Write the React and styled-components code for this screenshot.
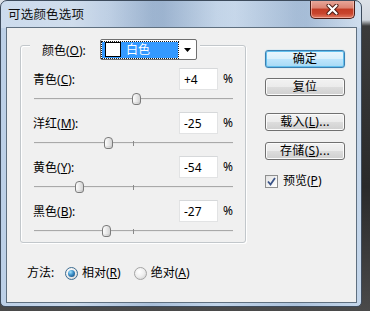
import React from 'react';
import styled, { createGlobalStyle } from 'styled-components';

const Global = createGlobalStyle`
  html, body { margin: 0; padding: 0; }
  body {
    width: 370px;
    height: 311px;
    overflow: hidden;
    background: linear-gradient(to bottom, #dde2e8 0, #d2d8df 20px, #3b3b3b 26px, #2a2a2a 60%, #4a4a4a 100%);
    font-family: "Noto Sans", "Noto Sans CJK SC", sans-serif;
    font-size: 12px;
    color: #000;
  }
`;

const Window = styled.div`
  width: 362px;
  height: 307px;
  box-sizing: border-box;
  border: 1px solid #3d4b5c;
  border-radius: 7px 7px 5px 5px;
  background: linear-gradient(90deg, #bcd0e7 0%, #c9d8ea 20%, #a9bfd9 42%, #c1d4e9 60%, #adc3dc 82%, #c4d6ea 100%);
  display: flex;
  flex-direction: column;
  overflow: hidden;
`;

const TitleBar = styled.div`
  height: 27px;
  display: flex;
  align-items: flex-start;
  padding-left: 7px;
  background: linear-gradient(90deg, rgba(255,255,255,0.25) 0%, rgba(255,255,255,0.05) 30%, rgba(80,110,150,0.18) 45%, rgba(255,255,255,0.15) 65%, rgba(90,120,160,0.12) 85%, rgba(255,255,255,0.2) 100%);
`;

const TitleText = styled.div`
  font-size: 12.5px;
  line-height: 14px;
  margin-top: 7px;
  color: #111;
  letter-spacing: 0.2px;
`;

const CloseButton = styled.div`
  margin-left: auto;
  margin-right: 6px;
  margin-top: -1px;
  width: 45px;
  height: 19px;
  box-sizing: border-box;
  border: 1px solid #4b1c16;
  border-top: none;
  border-radius: 0 0 5px 5px;
  background: linear-gradient(to bottom, #e9ab9e 0%, #dc8271 45%, #c23b24 50%, #c8452e 75%, #e07a62 100%);
  box-shadow: inset 0 0 0 1px rgba(255, 210, 200, 0.55);
  display: flex;
  align-items: center;
  justify-content: center;
`;

const Client = styled.div`
  margin: 0 5px 4px 6px;
  flex: 1;
  background: #f0f0f0;
  box-shadow: 0 0 0 1px #5f7080;
  display: flex;
`;

const LeftCol = styled.div`
  padding: 17px 0 0 13px;
  display: flex;
  flex-direction: column;
`;

const GroupBox = styled.div`
  position: relative;
  width: 226px;
  height: 198px;
  box-sizing: border-box;
  border: 1px solid #c2c7cb;
  border-radius: 3px;
  box-shadow: inset 1px 1px 0 #fff, 1px 1px 0 #fff;
  padding: 22px 11px 0 12px;
  display: flex;
  flex-direction: column;
`;

const Legend = styled.div`
  position: absolute;
  top: -7px;
  left: 9px;
  height: 21px;
  padding: 0 3px 0 12px;
  background: #f0f0f0;
  display: flex;
  align-items: center;
`;

const LegendLabel = styled.div`
  width: 58px;
  line-height: 14px;
  padding-top: 3px;
`;

const Dropdown = styled.div`
  width: 97px;
  height: 21px;
  box-sizing: border-box;
  border: 1px solid #6f6f6f;
  border-radius: 2px;
  background: #fff;
  display: flex;
  align-items: center;
  padding: 1px;
`;

const Selected = styled.div`
  width: 76px;
  height: 16px;
  box-sizing: border-box;
  background: #3399ff;
  outline: 1px dotted #1a1a1a;
  display: flex;
  align-items: center;
  padding-left: 3px;
  color: #fff;
  line-height: 14px;
`;

const Swatch = styled.div`
  width: 16px;
  height: 15px;
  box-sizing: border-box;
  background: #fff;
  border: 1px solid #000;
  margin-right: 5px;
`;

const ArrowArea = styled.div`
  flex: 1;
  display: flex;
  align-items: center;
  justify-content: center;
  padding-left: 2px;
`;

const SliderBlock = styled.div`
  height: 44px;
  display: flex;
  flex-direction: column;
`;

const ValueRow = styled.div`
  height: 22px;
  display: flex;
  align-items: center;
`;

const Label = styled.div`
  flex: 1;
  line-height: 14px;
  padding-top: 1px;
`;

const ValueInput = styled.input`
  width: 39px;
  height: 22px;
  box-sizing: border-box;
  margin: 0;
  border: 1px solid #e2e3e4;
  border-top-color: #d6d8da;
  background: #fff;
  font-family: "Noto Sans", "Noto Sans CJK SC", sans-serif;
  font-size: 12px;
  color: #000;
  padding: 0 0 0 4px;
  outline: none;
`;

const Percent = styled.div`
  width: 11px;
  margin-left: 5px;
  line-height: 14px;
`;

const TrackArea = styled.div`
  position: relative;
  height: 22px;
  margin: 0 1px 0 1px;
`;

const Track = styled.div`
  margin-top: 8px;
  height: 1px;
  background: #a9a9a9;
  border-bottom: 1px solid #e8e8e8;
`;

const Tick = styled.div`
  position: absolute;
  top: 7px;
  left: 99px;
  width: 1px;
  height: 5px;
  background: #8a8a8a;
`;

const Thumb = styled.div`
  position: absolute;
  top: 3px;
  width: 9px;
  height: 12px;
  box-sizing: border-box;
  border: 1px solid #7b7b7b;
  border-radius: 4px 4px 3px 3px;
  background: linear-gradient(to right, #fdfdfd 0%, #eaeaea 50%, #d4d4d4 100%);
  box-shadow: inset 0 -2px 0 rgba(0,0,0,0.06);
`;

const MethodRow = styled.div`
  margin-top: 22px;
  height: 16px;
  padding-left: 7px;
  display: flex;
  align-items: center;
`;

const MethodLabel = styled.div`
  width: 38px;
  line-height: 14px;
`;

const Radio = styled.div`
  width: 13px;
  height: 13px;
  box-sizing: border-box;
  border-radius: 50%;
  border: 1px solid ${p => (p.$checked ? '#3c6c91' : '#a4a4a4')};
  background: radial-gradient(circle at 40% 35%, #ffffff 0%, #eeeeee 50%, #c9c9c9 100%);
  display: flex;
  align-items: center;
  justify-content: center;
  margin-right: 4px;
  &::after {
    content: '';
    display: ${p => (p.$checked ? 'block' : 'none')};
    width: 7px;
    height: 7px;
    border-radius: 50%;
    background: radial-gradient(circle at 35% 30%, #9fe3ff 0%, #3a8cc6 45%, #0f3f6a 100%);
  }
`;

const RadioText = styled.div`
  line-height: 14px;
  margin-right: ${p => p.$gap || 0}px;
`;

const RightCol = styled.div`
  margin-left: 19px;
  padding-top: 22px;
  width: 80px;
  display: flex;
  flex-direction: column;
`;

const Button = styled.div`
  margin-top: ${p => p.$top || 0}px;
  width: 80px;
  height: 18px;
  box-sizing: border-box;
  border: 1px solid ${p => (p.$default ? '#3c7fb1' : '#707070')};
  border-radius: 3px;
  background: ${p =>
    p.$default
      ? 'linear-gradient(to bottom, #eaf6fd 0%, #d9f0fc 50%, #bee6fd 50%, #a7d9f5 100%)'
      : 'linear-gradient(to bottom, #f2f2f2 0%, #ebebeb 50%, #dddddd 50%, #cfcfcf 100%)'};
  box-shadow: ${p => (p.$default ? 'inset 0 0 0 1px #62c0ee, 0 0 1px #62c0ee' : 'inset 0 0 0 1px #fbfbfb')};
  display: flex;
  align-items: center;
  justify-content: center;
  line-height: 14px;
  font-size: 12px;
  letter-spacing: 0.3px;
`;

const CheckRow = styled.div`
  margin-top: 14px;
  display: flex;
  align-items: center;
`;

const CheckBox = styled.div`
  width: 13px;
  height: 13px;
  box-sizing: border-box;
  border: 1px solid #8e8f8f;
  background: linear-gradient(135deg, #e2e2e2 0%, #f4f4f4 60%, #ffffff 100%);
  display: flex;
  align-items: center;
  justify-content: center;
  margin-right: 5px;
`;

const CheckText = styled.div`
  line-height: 14px;
`;

const U = styled.u`
  text-decoration: underline;
  text-underline-offset: 1px;
`;

const MIN = -100;
const MAX = 100;
const TRACK_W = 198;

function SliderRow({ label, mnemonic, value }) {
  const center = ((value - MIN) / (MAX - MIN)) * TRACK_W;
  const text = value > 0 ? `+${value}` : `${value}`;
  return (
    <SliderBlock>
      <ValueRow>
        <Label>
          {label}(<U>{mnemonic}</U>):
        </Label>
        <ValueInput readOnly value={text} />
        <Percent>%</Percent>
      </ValueRow>
      <TrackArea>
        <Track />
        <Tick />
        <Thumb style={{ left: `${Math.round(center - 4.5)}px` }} />
      </TrackArea>
    </SliderBlock>
  );
}

export default function App() {
  return (
    <>
      <Global />
      <Window>
        <TitleBar>
          <TitleText>可选颜色选项</TitleText>
          <CloseButton>
            <svg width="13" height="11" viewBox="0 0 13 11">
              <path d="M2.5 1.5 L10.5 9.5 M10.5 1.5 L2.5 9.5" stroke="#4a1a12" strokeWidth="4" strokeLinecap="round" />
              <path d="M2.5 1.5 L10.5 9.5 M10.5 1.5 L2.5 9.5" stroke="#ffffff" strokeWidth="2.2" strokeLinecap="round" />
            </svg>
          </CloseButton>
        </TitleBar>
        <Client>
          <LeftCol>
            <GroupBox>
              <Legend>
                <LegendLabel>
                  颜色(<U>O</U>):
                </LegendLabel>
                <Dropdown>
                  <Selected>
                    <Swatch />
                    白色
                  </Selected>
                  <ArrowArea>
                    <svg width="7" height="4" viewBox="0 0 7 4">
                      <path d="M0 0 H7 L3.5 4 Z" fill="#000" />
                    </svg>
                  </ArrowArea>
                </Dropdown>
              </Legend>
              <SliderRow label="青色" mnemonic="C" value={4} />
              <SliderRow label="洋红" mnemonic="M" value={-25} />
              <SliderRow label="黄色" mnemonic="Y" value={-54} />
              <SliderRow label="黑色" mnemonic="B" value={-27} />
            </GroupBox>
            <MethodRow>
              <MethodLabel>方法:</MethodLabel>
              <Radio $checked />
              <RadioText $gap={13}>
                相对(<U>R</U>)
              </RadioText>
              <Radio />
              <RadioText>
                绝对(<U>A</U>)
              </RadioText>
            </MethodRow>
          </LeftCol>
          <RightCol>
            <Button $default>确定</Button>
            <Button $top={10}>复位</Button>
            <Button $top={17}>
              载入(<U>L</U>)...
            </Button>
            <Button $top={11}>
              存储(<U>S</U>)...
            </Button>
            <CheckRow>
              <CheckBox>
                <svg width="9" height="9" viewBox="0 0 9 9">
                  <path d="M1 4.5 L3.5 7.5 L8 1" fill="none" stroke="#3b5488" strokeWidth="1.8" />
                </svg>
              </CheckBox>
              <CheckText>
                预览(<U>P</U>)
              </CheckText>
            </CheckRow>
          </RightCol>
        </Client>
      </Window>
    </>
  );
}
